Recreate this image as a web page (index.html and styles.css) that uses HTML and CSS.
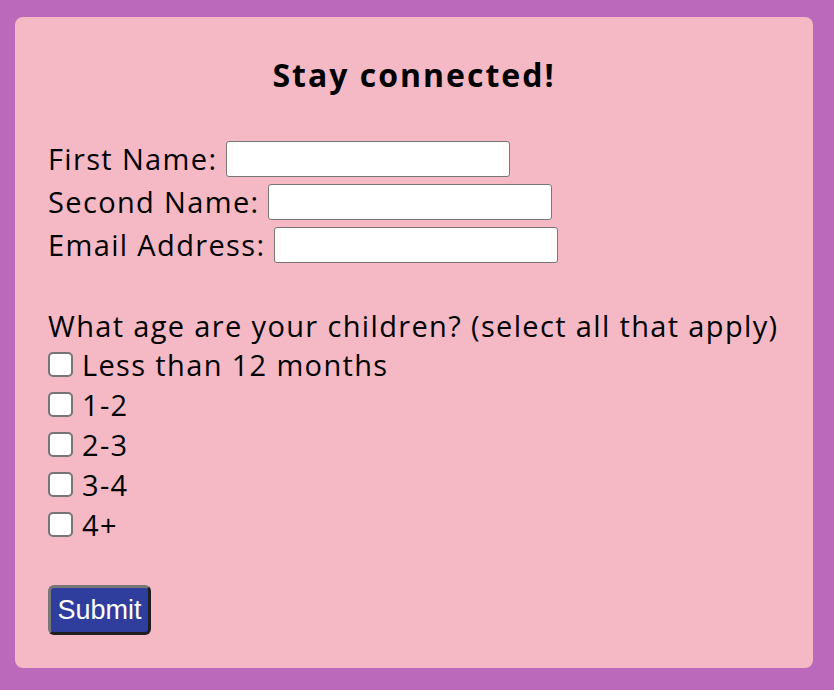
FILE: index.html
```html
<!DOCTYPE html>
<html>
<head>
<meta charset="utf-8">
<link rel="stylesheet" href="styles.css">
</head>
<body>
<div class="card">
  <h2 class="title">Stay connected!</h2>
  <form class="form">
    <div class="field"><label>First Name:</label><input class="text" type="text"></div>
    <div class="field"><label>Second Name:</label><input class="text" type="text"></div>
    <div class="field"><label>Email Address:</label><input class="text" type="email"></div>
    <p class="question">What age are your children? (select all that apply)</p>
    <label class="check"><input type="checkbox" class="box">Less than 12 months</label>
    <label class="check"><input type="checkbox" class="box">1-2</label>
    <label class="check"><input type="checkbox" class="box">2-3</label>
    <label class="check"><input type="checkbox" class="box">3-4</label>
    <label class="check"><input type="checkbox" class="box">4+</label>
    <div class="actions"><button type="button" class="submit">Submit</button></div>
  </form>
</div>
</body>
</html>
```

FILE: styles.css
```css
html, body {
  margin: 0;
  padding: 0;
}
body {
  background: #bb69bb;
  padding: 17px 21px 22px 15px;
  font-family: "Open Sans", Lato, sans-serif;
  color: #000;
}
.card {
  background: #f4b9c5;
  border-radius: 8px;
  height: 651px;
  box-sizing: border-box;
  padding: 40px 33px 0 33px;
}
.title {
  margin: 0;
  text-align: center;
  font-size: 32px;
  letter-spacing: 2px;
  line-height: 36px;
  font-weight: 700;
}
.form {
  margin-top: 44px;
  font-size: 29px;
  letter-spacing: 1.35px;
}
.field {
  display: flex;
  align-items: center;
  height: 43px;
  gap: 9px;
}
.text {
  width: 284px;
  height: 36px;
  box-sizing: border-box;
  border: 1.5px solid #767676;
  border-radius: 3px;
  background: #fff;
  margin: 0;
  padding: 0;
}
.question {
  margin: 42px 0 0 0;
  line-height: 36px;
}
.check {
  display: flex;
  align-items: center;
  height: 40px;
  gap: 9px;
}
.box {
  appearance: none;
  -webkit-appearance: none;
  width: 25px;
  height: 25px;
  margin: 0;
  background: #fff;
  border: 2px solid #767676;
  border-radius: 5px;
  box-sizing: border-box;
}
.actions {
  margin-top: 41px;
}
.submit {
  width: 103px;
  height: 50px;
  box-sizing: border-box;
  background: #2f3d9d;
  color: #fff;
  font-family: "Liberation Sans", Arial, sans-serif;
  font-size: 27px;
  letter-spacing: 0;
  border: 3px solid;
  border-color: #777 #1e1e1e #1e1e1e #777;
  border-radius: 6px;
  padding: 0;
}
```
